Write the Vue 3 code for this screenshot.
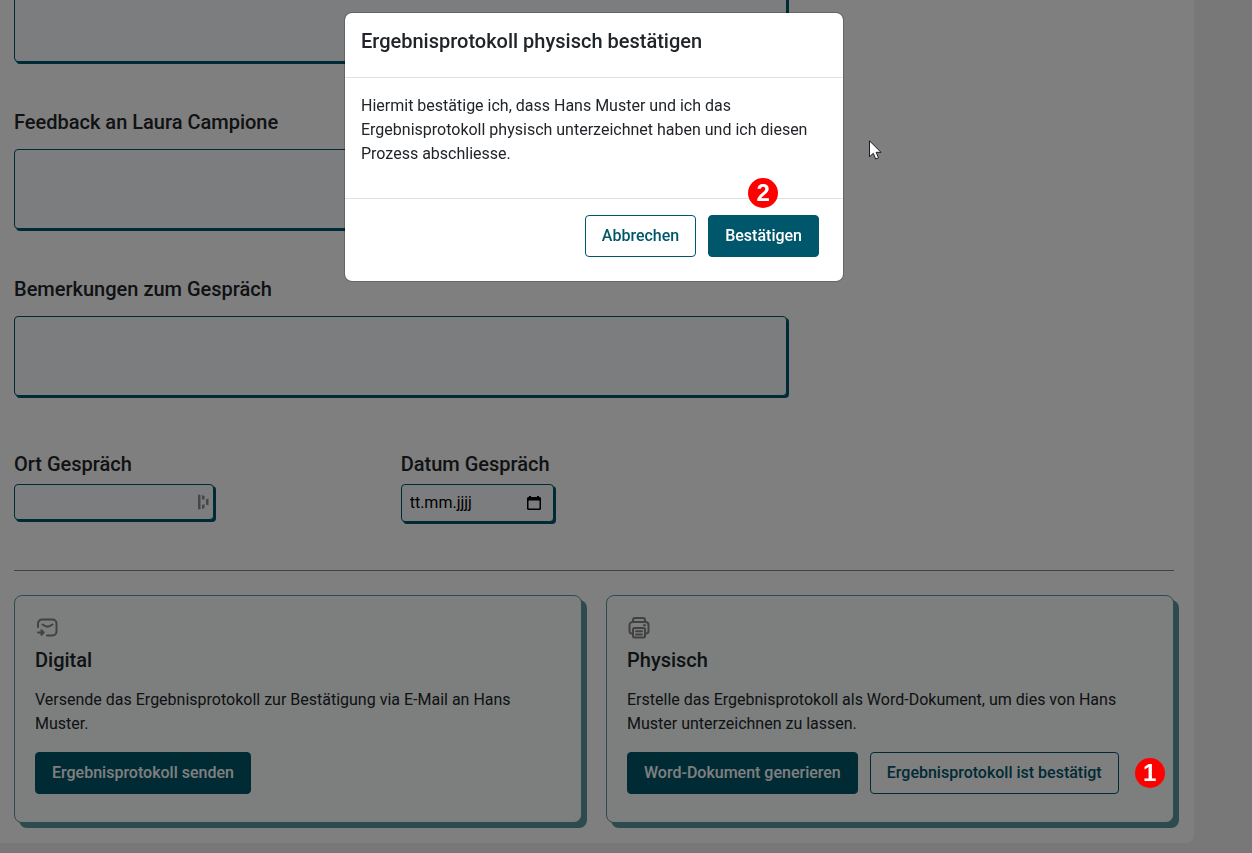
<template>
  <div class="page">
    <main class="panel">
      <div class="field field-first">
        <textarea aria-label="Feedback"></textarea>
      </div>
      <div v-for="f in textFields" :key="f.id" class="field">
        <label :for="f.id">{{ f.label }}</label>
        <textarea :id="f.id"></textarea>
      </div>

      <div class="meta-row">
        <div class="meta-field">
          <label for="ort">Ort Gespräch</label>
          <div class="input-box place-box">
            <input id="ort" type="text" />
            <svg class="fill-icon" width="12" height="16" viewBox="0 0 12 16" aria-hidden="true">
              <path d="M1 .5 3.500 1v14l-2.500.5zM5 1l2.500 1v4L5 5zM5 11l2.500-1v4L5 15zM9 5.500l2.500-1v7L9 10.500z" />
            </svg>
          </div>
        </div>
        <div class="meta-field">
          <label for="datum">Datum Gespräch</label>
          <div class="input-box date-box">
            <input id="datum" type="text" placeholder="tt.mm.jjjj" />
            <button type="button" class="picker" aria-label="Kalender öffnen">
              <svg width="14" height="14" viewBox="0 0 14 14" aria-hidden="true">
                <path fill-rule="evenodd" d="M2 0h2v1h6V0h2v1h1l1 1v11l-1 1H1l-1-1V2l1-1h1zM1.500 4.500v8h11v-8z" />
              </svg>
            </button>
          </div>
        </div>
      </div>

      <hr />

      <div class="cards">
        <section class="card">
          <svg class="card-icon" width="24" height="24" viewBox="0 0 24 24" aria-hidden="true">
            <path d="M3 11V7.500A4 4 0 0 1 7 3.500h10.500a4 4 0 0 1 4 4v8a4 4 0 0 1-4 4H12M7.500 8.500c3 2 3.600 2.300 5 2.300s2-.3 5-2.300M3 16.500h5.500M6.300 14.200l2.400 2.300-2.400 2.300" />
          </svg>
          <h2>Digital</h2>
          <p>Versende das Ergebnisprotokoll zur Bestätigung via E-Mail an Hans Muster.</p>
          <div class="actions">
            <button type="button" class="btn btn-primary">Ergebnisprotokoll senden</button>
          </div>
        </section>
        <section class="card">
          <svg class="card-icon" width="24" height="24" viewBox="0 0 24 24" aria-hidden="true">
            <path d="M6 6V4a2 2 0 0 1 2-2h8a2 2 0 0 1 2 2v2M6 17.500H5A2.500 2.500 0 0 1 2.500 15V9a3 3 0 0 1 3-3h13a3 3 0 0 1 3 3v6a2.500 2.500 0 0 1-2.500 2.500h-1M7.500 12h9A1.500 1.500 0 0 1 18 13.500v6.500a1.500 1.500 0 0 1-1.500 1.500h-9A1.500 1.500 0 0 1 6 20v-6.500A1.500 1.500 0 0 1 7.500 12zM9 15.200h6M9 18.500h6M17 9.200h1" />
          </svg>
          <h2>Physisch</h2>
          <p>Erstelle das Ergebnisprotokoll als Word-Dokument, um dies von Hans Muster unterzeichnen zu lassen.</p>
          <div class="actions">
            <button type="button" class="btn btn-primary">Word-Dokument generieren</button>
            <button type="button" class="btn btn-outline">Ergebnisprotokoll ist bestätigt</button>
            <span class="step step-inline">1</span>
          </div>
        </section>
      </div>
    </main>

    <div class="backdrop">
      <div class="modal" role="dialog" aria-modal="true" aria-labelledby="modal-title">
        <header class="modal-header">
          <h1 id="modal-title">Ergebnisprotokoll physisch bestätigen</h1>
        </header>
        <div class="modal-body">
          Hiermit bestätige ich, dass Hans Muster und ich das Ergebnisprotokoll physisch
          unterzeichnet haben und ich diesen Prozess abschliesse.
        </div>
        <footer class="modal-footer">
          <button type="button" class="btn btn-outline">Abbrechen</button>
          <div class="confirm">
            <button type="button" class="btn btn-primary">Bestätigen</button>
            <span class="step step-over">2</span>
          </div>
        </footer>
        <svg class="cursor" width="13" height="20" viewBox="0 0 13 20" aria-hidden="true">
          <path d="M.5.800v16l3.800-3.500 2.400 5.700 2.800-1.200-2.400-5.500h4.900z" />
        </svg>
      </div>
    </div>
  </div>
</template>

<script setup>
const textFields = [
  { id: 'feedback', label: 'Feedback an Laura Campione' },
  { id: 'bemerkungen', label: 'Bemerkungen zum Gespräch' }
]
</script>

<style>
body {
  margin: 0;
  background: #f0f0f0;
}
</style>

<style scoped>
.page {
  font-family: Roboto, "Liberation Sans", sans-serif;
  font-size: 16px;
  line-height: 24px;
  color: #212529;
  padding: 0 58px 10px 0;
  overflow: hidden;
}

* {
  box-sizing: border-box;
}

.panel {
  display: flex;
  flex-direction: column;
  padding: 0 20px 20px 14px;
  background: #fff;
  border-radius: 0 0 8px 0;
}

.field {
  display: flex;
  flex-direction: column;
  width: 66.66%;
  margin-bottom: 48px;
}

/* scrolled partly out of view */
.field-first {
  margin-top: -18px;
}

label,
h1,
h2 {
  margin: 0;
  font-size: 20px;
  line-height: 24px;
  font-weight: 500;
}

.field label {
  margin-bottom: 15px;
}

textarea,
.input-box {
  border: 1px solid #00566b;
  border-radius: 4px;
  background: #f8faff;
  box-shadow: 2px 2px 0 #00566b;
}

textarea {
  display: block;
  width: 100%;
  height: 80px;
  resize: none;
  font: inherit;
}

.meta-row {
  display: grid;
  grid-template-columns: repeat(3, 1fr);
  margin-top: 8px;
}

.meta-field label {
  display: block;
  margin-bottom: 8px;
}

.input-box {
  display: flex;
  align-items: center;
  padding: 0 8px;
}

.place-box {
  width: 200px;
  height: 36px;
  padding-right: 4px;
}

.date-box {
  width: 153px;
  height: 38px;
  padding-right: 12px;
}

.input-box input {
  flex: 1;
  min-width: 0;
  padding: 0;
  border: 0;
  outline: 0;
  background: transparent;
  font: inherit;
  color: #000;
}

.input-box input::placeholder {
  color: #000;
  opacity: 1;
}

.fill-icon {
  fill: #8c8c8c;
}

.picker {
  display: flex;
  padding: 0;
  border: 0;
  background: none;
}

hr {
  width: 100%;
  height: 1px;
  margin: 48px 0 24px;
  border: 0;
  background: #85878a;
}

.cards {
  display: grid;
  grid-template-columns: repeat(2, minmax(0, 1fr));
  gap: 24px;
}

.card {
  padding: 20px 20px 28px;
  border: 1px solid #5a98a0;
  border-radius: 8px;
  background: #fafffd;
  box-shadow: 5px 5px 0 #5a949c;
}

.card-icon {
  display: block;
  margin-bottom: 8px;
  fill: none;
  stroke: #858185;
  stroke-width: 2;
  stroke-linecap: round;
  stroke-linejoin: round;
}

.card p {
  margin: 16px 0;
}

.actions {
  display: flex;
  align-items: center;
  gap: 12px;
}

.btn {
  padding: 8px 16px;
  border: 1px solid #00566b;
  border-radius: 4px;
  font: inherit;
  font-weight: 500;
  white-space: nowrap;
}

.btn-primary {
  background: #00566b;
  color: #fff;
}

.btn-outline {
  background: #fff;
  color: #00566b;
}

.step {
  display: flex;
  flex-shrink: 0;
  align-items: center;
  justify-content: center;
  width: 30px;
  height: 30px;
  border-radius: 50%;
  background: #f00;
  color: #fff;
  font-family: "Liberation Sans", sans-serif;
  font-size: 24px;
  font-weight: 700;
}

.step-inline {
  position: relative;
  z-index: 20;
  margin-left: 4px;
}

.step-over {
  position: absolute;
  left: 40px;
  top: -37px;
}

.backdrop {
  position: fixed;
  inset: 0;
  z-index: 10;
  display: flex;
  align-items: flex-start;
  justify-content: center;
  padding: 12px 64px 12px 0;
  background: rgba(0, 0, 0, 0.5);
}

.modal {
  position: relative;
  width: 500px;
  border: 1px solid rgba(0, 0, 0, 0.2);
  border-radius: 8px;
  background: #fff;
  background-clip: padding-box;
}

.modal-header {
  padding: 16px 16px 24px;
  border-bottom: 1px solid #dee2e6;
}

.modal-body {
  padding: 16px 16px 32px;
}

.modal-footer {
  display: flex;
  justify-content: flex-end;
  gap: 12px;
  padding: 16px 24px 24px;
  border-top: 1px solid #dee2e6;
}

.confirm {
  position: relative;
}

.cursor {
  position: absolute;
  left: 524px;
  top: 127px;
  fill: #fff;
  stroke: #1a1a24;
  stroke-width: 1;
}
</style>
